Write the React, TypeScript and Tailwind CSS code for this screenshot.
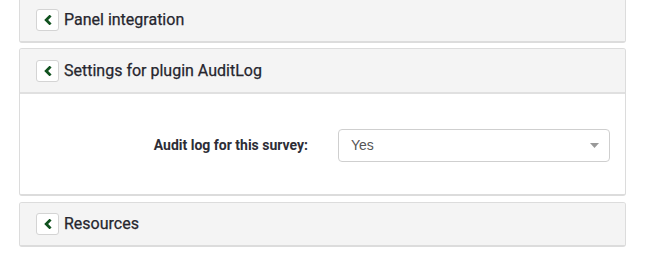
function ToggleButton() {
  return (
    <span className="flex h-[22px] w-[23px] items-center justify-center rounded-[3px] border border-[#d4d4d4] bg-white">
      <svg width="10" height="10" viewBox="0 0 10 10">
        <path d="M6.6 1.6 L3.2 5 L6.6 8.4" fill="none" stroke="#11521f" strokeWidth="2.8" strokeLinecap="square" />
      </svg>
    </span>
  )
}

function PanelHeader({ title, bordered }: { title: string; bordered?: boolean }) {
  return (
    <div
      className={
        'flex items-center gap-[5px] bg-[#f4f4f4] pl-[16px] ' +
        (bordered ? 'h-[45px] border-b-2 border-[#e0e0e0]' : 'h-[42px]')
      }
    >
      <ToggleButton />
      <span className="text-[16px] font-normal text-[#26262e] [-webkit-text-stroke:0.25px_#26262e]">{title}</span>
    </div>
  )
}

export default function App() {
  return (
    <div className="min-h-[278px] bg-white pl-[19px] pr-[21px] font-['Roboto',sans-serif]">
      <div className="-mt-[2px] flex flex-col">
        {/* Panel integration */}
        <div className="overflow-hidden rounded-[3px] border border-b-2 border-[#dcdcdc]">
          <PanelHeader title="Panel integration" />
        </div>

        {/* Settings for plugin AuditLog */}
        <div className="mt-[5px] overflow-hidden rounded-[3px] border border-b-2 border-[#dcdcdc]">
          <PanelHeader title="Settings for plugin AuditLog" bordered />
          <div className="flex h-[100px] items-start bg-white pt-[35px]">
            <label className="flex h-[33px] w-[288px] items-center justify-end text-[14px] font-bold text-[#2d2d36]">
              Audit log for this survey:
            </label>
            <div className="ml-[30px] flex h-[33px] w-[272px] items-center justify-between rounded-[4px] border border-[#cfcfcf] bg-white pl-[12px] pr-[10px]">
              <span className="font-['Liberation_Sans',sans-serif] text-[14px] text-[#555]">Yes</span>
              <svg width="9" height="5" viewBox="0 0 9 5">
                <path d="M0 0 L9 0 L4.5 5 Z" fill="#999" />
              </svg>
            </div>
          </div>
        </div>

        {/* Resources */}
        <div className="mt-[6px] overflow-hidden rounded-[3px] border border-b-2 border-[#dcdcdc]">
          <PanelHeader title="Resources" />
        </div>
      </div>
    </div>
  )
}
